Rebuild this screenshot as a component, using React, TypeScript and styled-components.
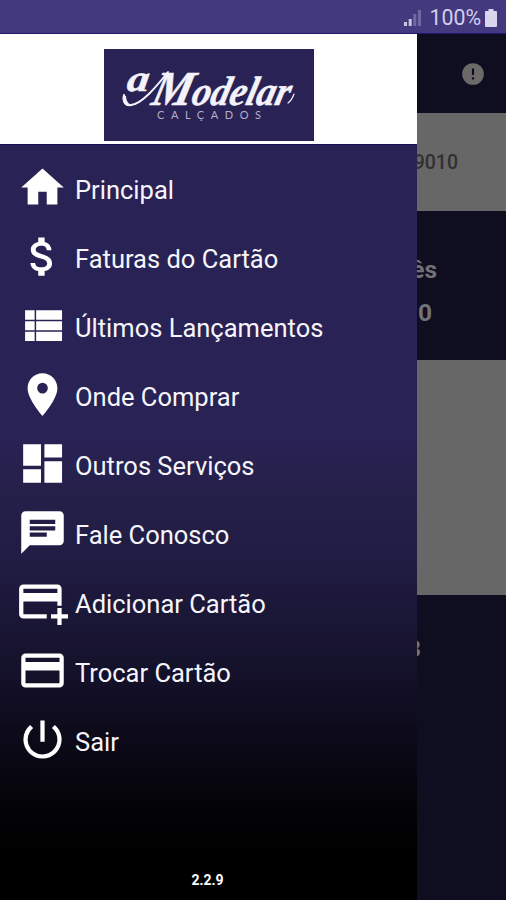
import React from "react";
import styled, { createGlobalStyle } from "styled-components";

const GlobalStyle = createGlobalStyle`
  *, *::before, *::after { box-sizing: border-box; }
  html, body { margin: 0; padding: 0; background: #000; }
  body { font-family: Roboto, "Liberation Sans", sans-serif; }
`;

const Screen = styled.div`
  display: flex;
  flex-direction: column;
  width: 506px;
  height: 900px;
  overflow: hidden;
  background: #0f0d20;
`;

const StatusBar = styled.header`
  display: flex;
  justify-content: flex-end;
  align-items: center;
  flex: none;
  height: 34px;
  padding: 2px 9px 0 0;
  background: #43397f;
  border-bottom: 1px solid #1f1870;
  color: #d3cfea;
`;

const SignalIcon = styled.svg`
  width: 17px;
  height: 17px;
  margin-right: 8px;
`;

const BatteryLevel = styled.span`
  font-size: 21.3px;
  line-height: 32px;
`;

const BatteryIcon = styled.svg`
  width: 12px;
  height: 18px;
  margin-left: 4px;
`;

const Body = styled.div`
  display: flex;
  flex: 1;
  min-height: 0;
`;

const Drawer = styled.aside`
  display: flex;
  flex-direction: column;
  flex: none;
  width: 417px;
  background: linear-gradient(
    to bottom,
    #292254 0,
    #292254 405px,
    #252049 460px,
    #211c43 526px,
    #15122c 630px,
    #0b0916 715px,
    #020204 790px,
    #000 830px
  );
`;

const DrawerHeader = styled.div`
  display: flex;
  justify-content: center;
  flex: none;
  height: 111px;
  padding-top: 15px;
  background: #fff;
  border-bottom: 1px solid #171052;
`;

const Logo = styled.svg`
  width: 210px;
  height: 92px;
  background: #292254;
`;

const Menu = styled.nav`
  display: flex;
  flex-direction: column;
  padding-top: 10px;
`;

const MenuItem = styled.a`
  display: flex;
  align-items: center;
  height: 69px;
  padding-left: 17px;
  color: #f6f5fb;
  text-decoration: none;
`;

const MenuIcon = styled.svg`
  flex: none;
  width: 51px;
  height: 51px;
  margin: 0 7px 4px 0;
  fill: #fff;
`;

const MenuLabel = styled.span`
  font-size: 25.5px;
  line-height: 32px;
  white-space: nowrap;
`;

const Version = styled.footer`
  margin-top: auto;
  padding: 0 2px 11px 0;
  text-align: center;
  font-size: 14px;
  line-height: 18px;
  font-weight: 700;
  color: #fff;
`;

const Backdrop = styled.main`
  display: flex;
  flex-direction: column;
  flex: 1;
  min-width: 0;
  overflow: hidden;
`;

const Section = styled.section<{ $height: number; $light?: boolean }>`
  display: flex;
  flex-direction: column;
  align-items: flex-end;
  flex: none;
  height: ${(p) => p.$height}px;
  background: ${(p) => (p.$light ? "#676767" : "#0f0d20")};
`;

const AlertIcon = styled.svg`
  width: 26px;
  height: 26px;
  margin: 27px 20px 0 0;
  fill: #6b6a69;
`;

const CardDigits = styled.span`
  margin: 38px 48px 0 0;
  font-size: 19.5px;
  line-height: 24px;
  font-weight: 500;
  color: #303030;
`;

const Summary = styled.span<{ $top: number; $right: number }>`
  margin: ${(p) => p.$top}px ${(p) => p.$right}px 0 0;
  font-size: 24.5px;
  line-height: 30px;
  font-weight: 700;
  color: #727177;
`;

const items: { label: string; path: string }[] = [
  { label: "Principal", path: "M10 20v-6h4v6h5v-8h3L12 3 2 12h3v8z" },
  {
    label: "Faturas do Cartão",
    path: "M11.8 10.9c-2.27-.59-3-1.2-3-2.15 0-1.09 1.01-1.85 2.7-1.85 1.78 0 2.44.85 2.5 2.1h2.21c-.07-1.72-1.12-3.3-3.21-3.81V3h-3v2.16c-1.94.42-3.5 1.68-3.5 3.61 0 2.31 1.91 3.46 4.7 4.13 2.5.6 3 1.48 3 2.41 0 .69-.49 1.79-2.7 1.79-2.06 0-2.87-.92-2.98-2.1h-2.2c.12 2.19 1.76 3.42 3.68 3.83V21h3v-2.15c1.95-.37 3.5-1.5 3.5-3.55 0-2.84-2.43-3.81-4.7-4.4z",
  },
  {
    label: "Últimos Lançamentos",
    path: "M3.8 4.8h4.5v4.5H3.8zM9 4.8h12.2v4.5H9zM3.8 9.95h4.5v4.3H3.8zM9 9.95h12.2v4.3H9zM3.8 14.9h4.5v4.4H3.8zM9 14.9h12.2v4.4H9z",
  },
  {
    label: "Onde Comprar",
    path: "M12 2C8.13 2 5 5.13 5 9c0 5.25 7 13 7 13s7-7.75 7-13c0-3.87-3.13-7-7-7zm0 9.5a2.5 2.5 0 0 1 0-5 2.5 2.5 0 0 1 0 5z",
  },
  {
    label: "Outros Serviços",
    path: "M2.9 13.1h8.4V2.9H2.9zm0 8h8.4v-6.4H2.9zm10 0h8.3V10.9h-8.3zm0-18.2v6.3h8.3V2.9z",
  },
  {
    label: "Fale Conosco",
    path: "M20 2H4c-1.1 0-1.99.9-1.99 2L2 22l4-4h14c1.1 0 2-.9 2-2V4c0-1.1-.9-2-2-2zM6 9h12v2H6V9zm8 5H6v-2h8v2zm4-6H6V6h12v2z",
  },
  {
    label: "Adicionar Cartão",
    path: "M21 18h3v2h-3v3h-2v-3h-3v-2h3v-3h2v3M19 8V6H3v2h16m0 4H3v6h11v2H3c-1.11 0-2-.9-2-2V6c0-1.11.89-2 2-2h16a2 2 0 0 1 2 2v8h-2v-2z",
  },
  {
    label: "Trocar Cartão",
    path: "M20 4H4c-1.11 0-1.99.89-1.99 2L2 18c0 1.11.89 2 2 2h16c1.11 0 2-.89 2-2V6c0-1.11-.89-2-2-2zm0 14H4v-6h16v6zm0-10H4V6h16v2z",
  },
  {
    label: "Sair",
    path: "M13 3h-2v10h2V3zm4.83 2.17-1.42 1.42A6.92 6.92 0 0 1 19 12c0 3.87-3.13 7-7 7A6.995 6.995 0 0 1 7.58 6.58L6.17 5.17A8.932 8.932 0 0 0 3 12a9 9 0 0 0 18 0c0-2.74-1.23-5.18-3.17-6.83z",
  },
];

function BrandLogo() {
  return (
    <Logo viewBox="0 0 210 92" role="img" aria-label="a Modelar Calçados">
      <g
        fill="#f4f2fa"
        stroke="#f4f2fa"
        strokeWidth="0.5"
        fontFamily='"Liberation Serif", serif'
        fontStyle="italic"
        fontWeight="700"
      >
        <text
          transform="translate(22 42) skewX(-8)"
          fontSize="37"
          textLength="22"
          lengthAdjust="spacingAndGlyphs"
        >
          a
        </text>
        <text
          transform="translate(46 56) skewX(-14)"
          fontSize="41"
          textLength="138"
          lengthAdjust="spacingAndGlyphs"
        >
          <tspan fontSize="49">M</tspan>
          <tspan>odelar</tspan>
        </text>
      </g>
      <path
        d="M20 46c-1 8 2 11 7 10 11-1 25-18 37-33"
        fill="none"
        stroke="#f4f2fa"
        strokeWidth="2"
        strokeLinecap="round"
      />
      <path d="M19 46c-2 9 4 13 10 10-4 0-7-4-7-9z" fill="#f4f2fa" />
      <path
        d="M184 54q4-3 6-9"
        fill="none"
        stroke="#f4f2fa"
        strokeWidth="1.2"
        strokeLinecap="round"
      />
      <text
        x="53"
        y="70"
        fill="#b3aecd"
        fontFamily="Lato, sans-serif"
        fontSize="11"
        textLength="104"
        lengthAdjust="spacing"
      >
        CALÇADOS
      </text>
    </Logo>
  );
}

export default function App() {
  return (
    <>
      <GlobalStyle />
      <Screen>
        <StatusBar>
          <SignalIcon viewBox="0 0 17 17">
            <path d="M0 13h3v4H0zM4.7 10h3v7h-3z" fill="#c9c5e4" />
            <path d="M9.3 5h3v12h-3zM14 1h3v16h-3z" fill="#71699f" />
          </SignalIcon>
          <BatteryLevel>100%</BatteryLevel>
          <BatteryIcon viewBox="0 0 12 18">
            <path
              d="M3.5 0h5v2H11q1 0 1 1v14q0 1-1 1H1q-1 0-1-1V3q0-1 1-1h2.5z"
              fill="#d9d6ee"
            />
          </BatteryIcon>
        </StatusBar>
        <Body>
          <Drawer>
            <DrawerHeader>
              <BrandLogo />
            </DrawerHeader>
            <Menu>
              {items.map((item) => (
                <MenuItem key={item.label}>
                  <MenuIcon viewBox="0 0 24 24">
                    <path d={item.path} fillRule="evenodd" />
                  </MenuIcon>
                  <MenuLabel>{item.label}</MenuLabel>
                </MenuItem>
              ))}
            </Menu>
            <Version>2.2.9</Version>
          </Drawer>
          <Backdrop>
            <Section $height={79}>
              <AlertIcon viewBox="0 0 24 24">
                <path d="M12 2a10 10 0 1 0 0 20 10 10 0 0 0 0-20zm1 15h-2v-2h2v2zm0-4h-2V7h2v6z" />
              </AlertIcon>
            </Section>
            <Section $height={98} $light>
              <CardDigits>9010</CardDigits>
            </Section>
            <Section $height={149}>
              <Summary $top={44} $right={69}>ês</Summary>
              <Summary $top={13} $right={74}>0</Summary>
            </Section>
            <Section $height={235} $light />
            <Section $height={305}>
              <Summary $top={39} $right={85}>3</Summary>
            </Section>
          </Backdrop>
        </Body>
      </Screen>
    </>
  );
}
